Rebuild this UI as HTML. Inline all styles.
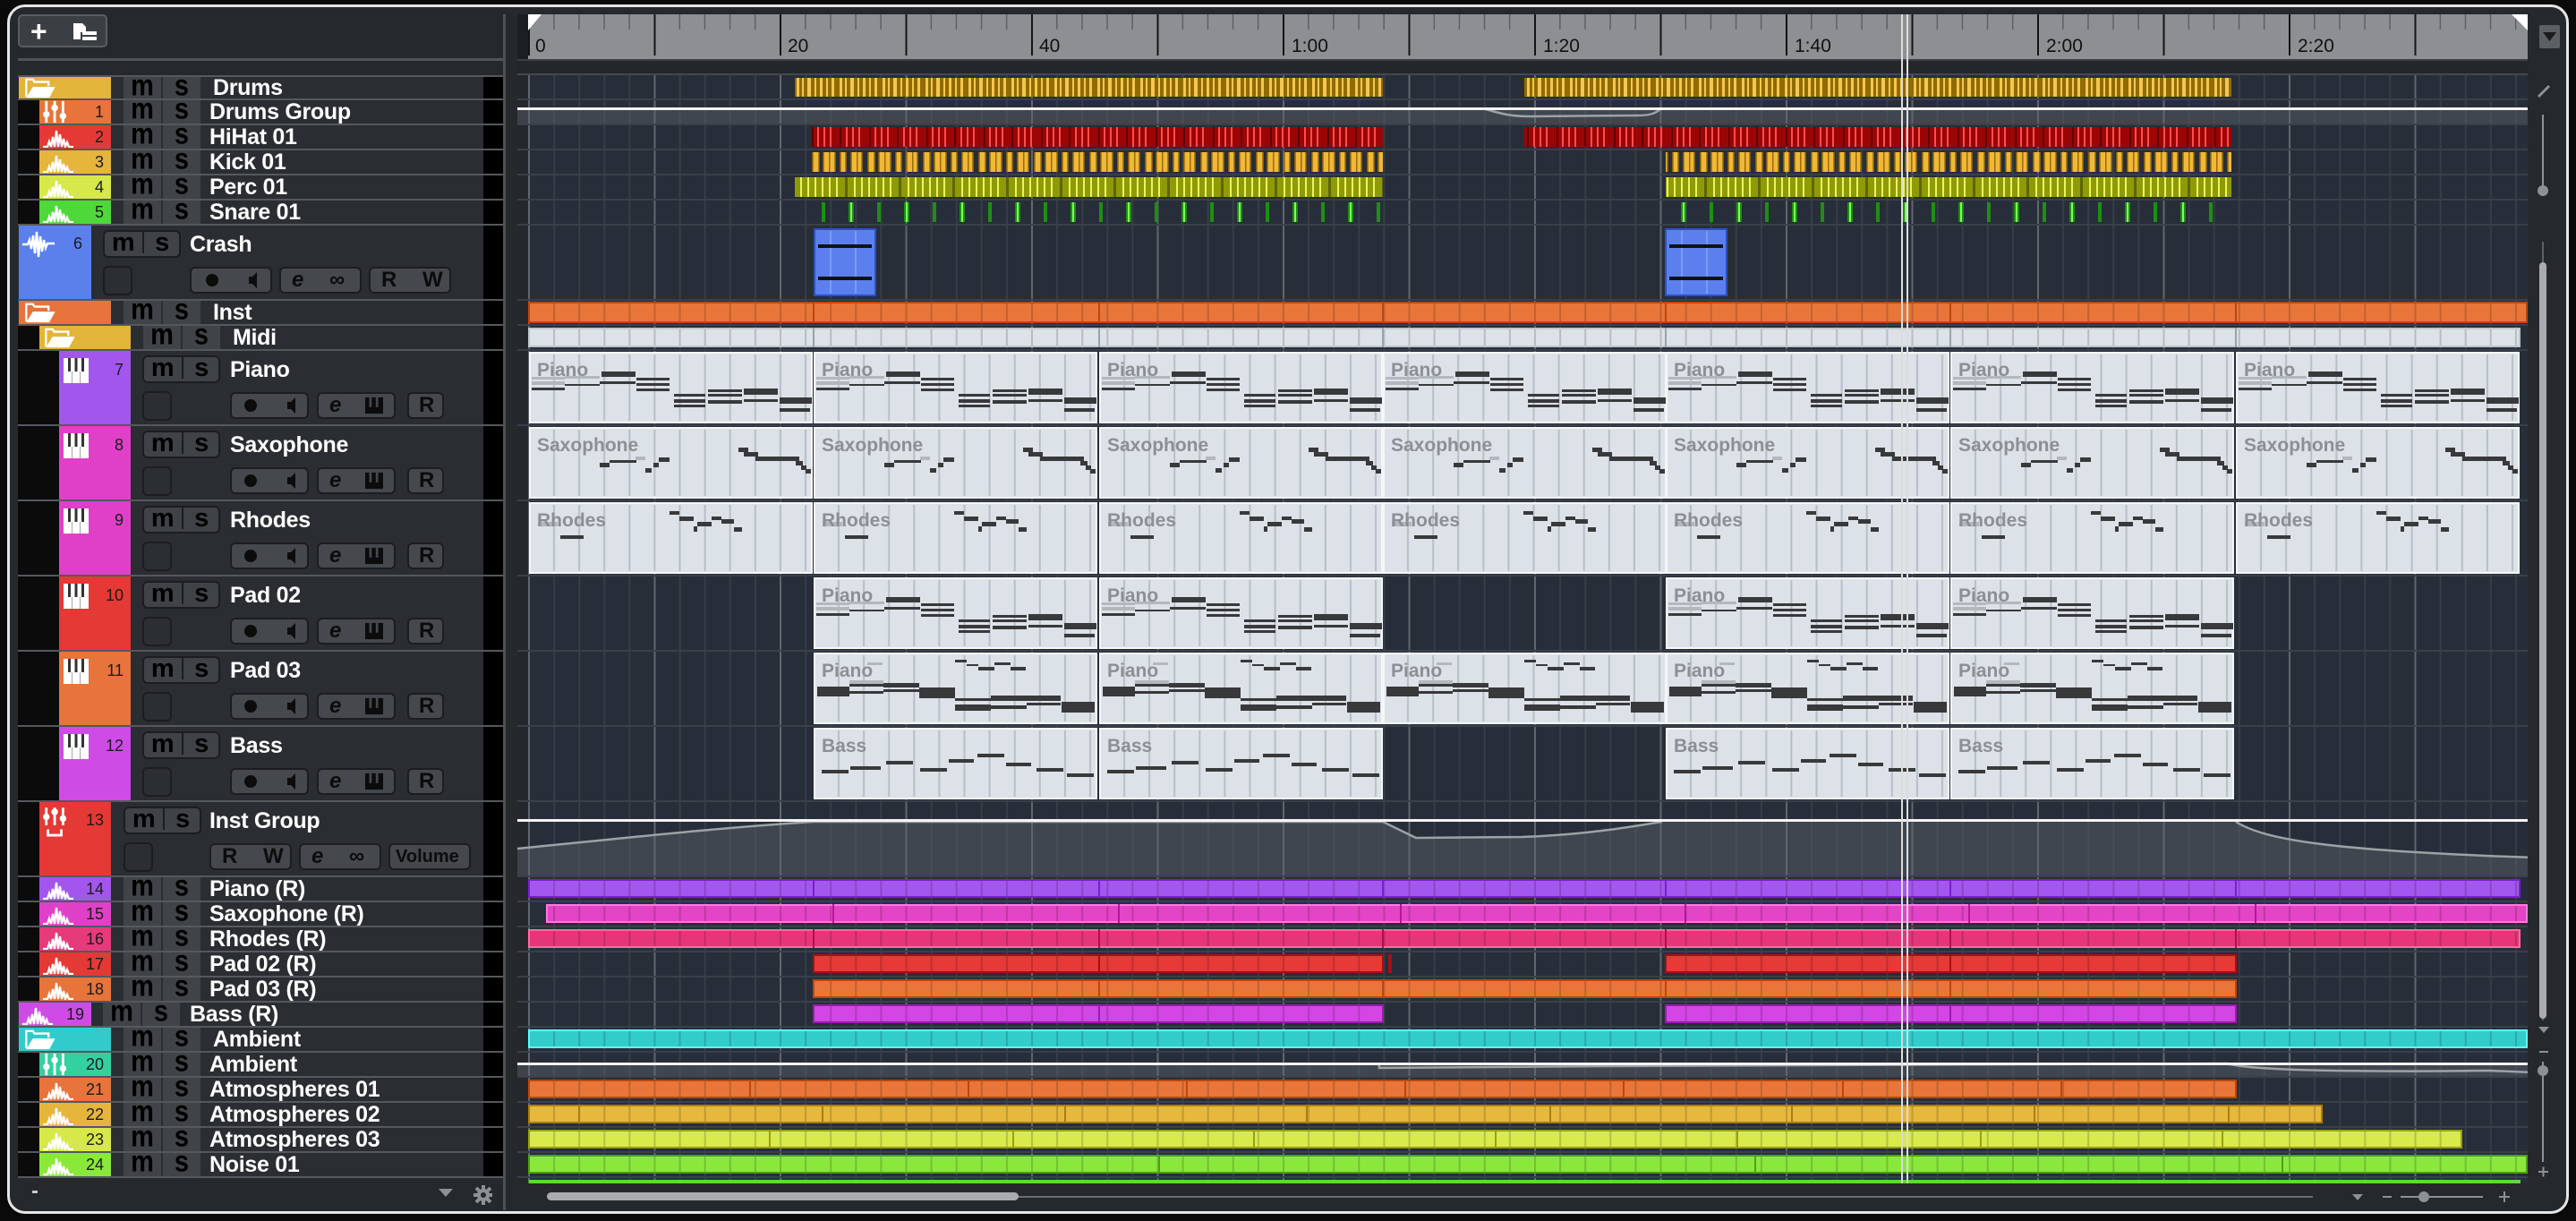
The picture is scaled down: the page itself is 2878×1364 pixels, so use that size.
<!DOCTYPE html>
<html><head><meta charset="utf-8"><style>
body{margin:0;background:#0a0a0a;width:2878px;height:1364px;overflow:hidden;position:relative;font-family:"Liberation Sans",Arial,sans-serif}
.a{position:absolute}
.rw{position:absolute;left:0;width:562px;line-height:26px;height:26px}
.lk{position:absolute;top:0;height:100%;background:#0b0b0b}
.c{position:absolute;top:0;height:100%}
.ic{position:absolute;overflow:visible}
.nu{position:absolute;top:0;font-size:18px;color:#1c1c1c;text-align:right}
.m,.s{position:absolute;top:0;height:100%;width:42px;background:#404347;color:#000;font-weight:900;font-size:29px;text-align:center;line-height:20px;transform-origin:50% 50%}
.m span,.s span{display:inline-block;transform:scaleY(1.15)}
.n{position:absolute;top:0;color:#fff;font-weight:bold;font-size:25px;white-space:nowrap;letter-spacing:-0.3px}
.bx{position:absolute;background:#3f4246;border:2px solid #1b1d20;border-radius:6px;box-sizing:border-box}
.bx span{position:absolute;top:0;width:50%;text-align:center;color:#000;font-weight:900;font-size:29px;line-height:24px}
.g{position:absolute;background:#45484c;border:2px solid #1b1d20;border-radius:6px;box-sizing:border-box;height:30px;color:#0c0c0c;font-weight:bold;font-size:24px;line-height:26px}
.g i{position:absolute;font-style:normal}
.sp{position:absolute;left:20px;width:542px;height:2px;background:#55585c}
</style></head><body>

<svg width="0" height="0" style="position:absolute">
<defs>
<symbol id="wf" viewBox="0 0 36 22"><path d="M1 21H6L8 15L10 21L12 10L14 21L16 3L18 21L20 7L22 21L24 12L26 21L28 16L30 21H35" stroke="#fff" stroke-width="2.3" fill="none"/></symbol>
<symbol id="wf2" viewBox="0 0 38 30"><path d="M1 15H7L9 10L11 20L13 5L15 25L17 1L19 29L21 6L23 23L25 10L27 19L29 14H37" stroke="#fff" stroke-width="2.4" fill="none"/></symbol>
<symbol id="fd" viewBox="0 0 40 26"><path d="M3 24V3H11L13 6H30V11" stroke="#fff" stroke-width="2.5" fill="none"/><path d="M3 25L11 12H38L31 25Z" fill="#fff"/></symbol>
<symbol id="gr" viewBox="0 0 30 28"><g stroke="#fff" stroke-width="3"><path d="M4 1V27M14 1V27M24 1V27"/></g><g fill="#fff"><circle cx="4" cy="17" r="4"/><circle cx="14" cy="9" r="4"/><circle cx="24" cy="19" r="4"/></g></symbol>
<symbol id="gr2" viewBox="0 0 30 40"><g stroke="#fff" stroke-width="3"><path d="M4 1V22M14 1V22M24 1V22"/></g><g fill="#fff"><circle cx="4" cy="12" r="4"/><circle cx="14" cy="6" r="4"/><circle cx="24" cy="14" r="4"/></g><path d="M6 27V34H22V27" stroke="#fff" stroke-width="3" fill="none"/></symbol>
<symbol id="pi" viewBox="0 0 28 28"><rect width="28" height="28" fill="#fff"/><g fill="#333"><rect x="5" y="0" width="3" height="15"/><rect x="12.5" y="0" width="3" height="15"/><rect x="20" y="0" width="3" height="15"/></g><g fill="rgba(0,0,0,.35)"><rect x="9" y="15" width="1" height="13"/><rect x="18" y="15" width="1" height="13"/></g></symbol>
<symbol id="spk" viewBox="0 0 12 22"><path d="M2 7H6L11 2V20L6 15H2Z" fill="#0c0c0c"/></symbol>
<symbol id="keys" viewBox="0 0 22 20"><rect x="0" y="0" width="22" height="20" fill="#0c0c0c"/><g fill="#45484c"><rect x="5" y="0" width="3" height="12"/><rect x="13" y="0" width="3" height="12"/></g></symbol>
</defs></svg>

<div class="a" style="left:8px;top:5px;width:2856px;height:1345px;border:3px solid #e6e6e6;border-radius:20px;background:#26292c"></div>

<svg class="a" style="left:0;top:0" width="2878" height="1364">
<defs>
<pattern id="pg" x="590" y="0" width="140.5" height="10" patternUnits="userSpaceOnUse">
<rect x="28.1" width="2" height="10" fill="#363d47"/><rect x="56.2" width="2" height="10" fill="#363d47"/><rect x="84.3" width="2" height="10" fill="#363d47"/><rect x="112.4" width="2" height="10" fill="#363d47"/><rect x="0" width="2" height="10" fill="#62666c"/></pattern>
<pattern id="prl" x="590" y="0" width="140.5" height="66" patternUnits="userSpaceOnUse">
<rect x="0" y="16" width="2" height="46" fill="#141414"/><g fill="#5e6063"><rect x="28.1" y="16" width="1.5" height="17"/><rect x="56.2" y="16" width="1.5" height="17"/><rect x="84.3" y="16" width="1.5" height="17"/><rect x="112.4" y="16" width="1.5" height="17"/></g></pattern>
<pattern id="tk" x="590" y="0" width="28.1" height="10" patternUnits="userSpaceOnUse"><rect width="2" height="10" fill="rgba(0,0,0,.17)"/></pattern>
<pattern id="tc" x="0" y="0" width="28.1" height="10" patternUnits="userSpaceOnUse"><rect x="26" width="2" height="10" fill="#b6bec8"/></pattern>
<pattern id="pdf" x="888" y="0" width="48" height="10" patternUnits="userSpaceOnUse"><rect width="48" height="10" fill="#8f6b00"/><g fill="#f5c650"><rect x="2" width="3" height="10"/><rect x="8" width="2" height="10"/><rect x="14" width="4" height="10"/><rect x="22" width="2" height="10"/><rect x="28" width="3" height="10"/><rect x="35" width="2" height="10"/><rect x="41" width="3" height="10"/></g></pattern>
<pattern id="phh" x="907" y="0" width="64" height="10" patternUnits="userSpaceOnUse"><rect width="64" height="10" fill="#9c0505"/><g fill="#ff4d4d"><rect x="6" width="2" height="10"/><rect x="13" width="2" height="10"/><rect x="20" width="2" height="10"/><rect x="38" width="2" height="10"/><rect x="45" width="2" height="10"/><rect x="52" width="2" height="10"/></g><rect x="0" width="2" height="10" fill="#5e0000"/><rect x="31" width="2" height="10" fill="#5e0000"/></pattern>
<pattern id="pk" x="907" y="0" width="62" height="10" patternUnits="userSpaceOnUse"><g fill="#f0b83a" stroke="#9b6c00" stroke-width="1.5"><rect x="1" y="-2" width="7" height="14"/><rect x="13" y="-2" width="13" height="14"/><rect x="32" y="-2" width="6" height="14"/><rect x="44" y="-2" width="12" height="14"/></g><rect x="19" width="1.5" height="10" fill="#9b6c00"/><rect x="50" width="1.5" height="10" fill="#9b6c00"/></pattern>
<pattern id="ppc" x="888" y="0" width="60" height="10" patternUnits="userSpaceOnUse"><rect width="60" height="10" fill="#8f9b06"/><g fill="#ecf45c"><rect x="6" width="2" height="10"/><rect x="14" width="2" height="10"/><rect x="22" width="2" height="10"/><rect x="30" width="2" height="10"/><rect x="38" width="2" height="10"/><rect x="46" width="2" height="10"/></g><rect x="56" width="3" height="10" fill="#5d6600"/></pattern>
<pattern id="psn" x="918" y="0" width="62" height="10" patternUnits="userSpaceOnUse"><rect x="0" width="4" height="10" fill="#1d8f12"/><rect x="30" width="6" height="10" fill="#1d8f12"/><rect x="32" width="2" height="10" fill="#7dff5a"/></pattern>
<g id="cb"><rect x="0" y="0" width="315" height="78" fill="#dde2e8" stroke="#f4f6f8" stroke-width="2"/><rect x="2" y="2" width="311" height="74" fill="url(#tc)"/></g>
<g id="np"><g fill="#b3b8be"><rect x="2" y="27" width="37" height="3"/><rect x="2" y="32" width="37" height="4"/><rect x="39" y="26" width="39" height="3"/></g><g fill="#38393b"><rect x="2" y="39" width="37" height="3"/><rect x="39" y="35" width="39" height="2"/><rect x="80" y="21" width="38" height="6"/><rect x="78" y="32" width="40" height="3"/><rect x="119" y="28" width="37" height="3"/><rect x="119" y="34" width="37" height="3"/><rect x="119" y="40" width="37" height="3"/><rect x="161" y="46" width="35" height="3"/><rect x="161" y="52" width="35" height="4"/><rect x="161" y="58" width="35" height="3"/><rect x="199" y="41" width="38" height="3"/><rect x="199" y="46" width="38" height="3"/><rect x="199" y="53" width="38" height="4"/><rect x="239" y="40" width="38" height="7"/><rect x="239" y="52" width="38" height="3"/><rect x="279" y="50" width="36" height="7"/><rect x="279" y="62" width="34" height="4"/></g></g>
<g id="ns"><rect x="118" y="32" width="11" height="4" fill="#b3b8be"/><g fill="#38393b"><rect x="78" y="39" width="11" height="5"/><rect x="89" y="36" width="30" height="3"/><rect x="129" y="45" width="7" height="5"/><rect x="138" y="39" width="6" height="5"/><rect x="144" y="33" width="12" height="5"/><rect x="233" y="22" width="11" height="5"/><rect x="239" y="27" width="16" height="5"/><rect x="252" y="32" width="49" height="5"/><rect x="297" y="37" width="8" height="5"/><rect x="303" y="42" width="6" height="5"/><rect x="308" y="46" width="6" height="5"/></g></g>
<g id="nr"><rect x="9" y="21" width="22" height="5" fill="#b3b8be"/><g fill="#38393b"><rect x="34" y="36" width="26" height="4"/><rect x="156" y="9" width="11" height="4"/><rect x="167" y="15" width="16" height="5"/><rect x="183" y="26" width="4" height="6"/><rect x="187" y="21" width="16" height="5"/><rect x="203" y="15" width="11" height="4"/><rect x="214" y="18" width="14" height="5"/><rect x="228" y="27" width="9" height="5"/></g></g>
<g id="n3"><g fill="#b3b8be"><rect x="39" y="30" width="38" height="4"/><rect x="59" y="10" width="17" height="3"/></g><g fill="#38393b"><rect x="3" y="37" width="36" height="11"/><rect x="39" y="34" width="38" height="3"/><rect x="39" y="42" width="38" height="3"/><rect x="77" y="33" width="40" height="5"/><rect x="77" y="40" width="40" height="3"/><rect x="117" y="38" width="40" height="12"/><rect x="157" y="50" width="40" height="3"/><rect x="157" y="57" width="40" height="7"/><rect x="197" y="47" width="40" height="6"/><rect x="197" y="58" width="40" height="4"/><rect x="237" y="47" width="38" height="6"/><rect x="237" y="55" width="38" height="3"/><rect x="276" y="54" width="37" height="12"/><rect x="157" y="7" width="13" height="3"/><rect x="170" y="12" width="13" height="2"/><rect x="183" y="15" width="18" height="4"/><rect x="201" y="10" width="18" height="3"/><rect x="219" y="15" width="17" height="4"/></g></g>
<g id="nb" fill="#38393b"><rect x="8" y="46" width="30" height="4"/><rect x="40" y="42" width="34" height="4"/><rect x="80" y="36" width="30" height="4"/><rect x="118" y="44" width="30" height="4"/><rect x="150" y="34" width="28" height="4"/><rect x="182" y="28" width="30" height="4"/><rect x="214" y="38" width="28" height="4"/><rect x="248" y="44" width="30" height="4"/><rect x="282" y="50" width="30" height="4"/></g>
</defs>
<style>.cl{font:bold 21px "Liberation Sans",Arial,sans-serif;fill:#8c8f93}.rl{font:21px "Liberation Sans",Arial,sans-serif;fill:#111}</style>

<rect x="578" y="16" width="12" height="50" fill="#1c1f22"/>
<rect x="590" y="16" width="2234" height="50" fill="#8d8f92"/>
<rect x="590" y="16" width="2234" height="50" fill="url(#prl)"/>
<path d="M590 16H605L590 34Z" fill="#fff"/><path d="M2806 16H2824V34Z" fill="#fff"/>
<text class="rl" x="598" y="58">0</text><text class="rl" x="880" y="58">20</text><text class="rl" x="1161" y="58">40</text><text class="rl" x="1443" y="58">1:00</text><text class="rl" x="1724" y="58">1:20</text><text class="rl" x="2005" y="58">1:40</text><text class="rl" x="2286" y="58">2:00</text><text class="rl" x="2567" y="58">2:20</text>
<rect x="578" y="66" width="2252" height="18" fill="#24272a"/><rect x="578" y="66" width="2252" height="2" fill="#3c4045"/><rect x="578" y="82" width="2252" height="2" fill="#45494e"/>

<rect x="578" y="84" width="12" height="1238" fill="#24282c"/>
<rect x="590" y="84" width="2234" height="1238" fill="#272e39"/>
<rect x="590" y="84" width="2234" height="1238" fill="url(#pg)"/>
<g fill="#39404a">
<rect x="578" y="110" width="2246" height="2"/><rect x="578" y="138" width="2246" height="2"/><rect x="578" y="166" width="2246" height="2"/><rect x="578" y="194" width="2246" height="2"/><rect x="578" y="222" width="2246" height="2"/><rect x="578" y="250" width="2246" height="2"/><rect x="578" y="334" width="2246" height="2"/><rect x="578" y="362" width="2246" height="2"/><rect x="578" y="390" width="2246" height="2"/><rect x="578" y="474" width="2246" height="2"/><rect x="578" y="558" width="2246" height="2"/><rect x="578" y="642" width="2246" height="2"/><rect x="578" y="726" width="2246" height="2"/><rect x="578" y="810" width="2246" height="2"/><rect x="578" y="894" width="2246" height="2"/><rect x="578" y="978" width="2246" height="2"/><rect x="578" y="1006" width="2246" height="2"/><rect x="578" y="1034" width="2246" height="2"/><rect x="578" y="1062" width="2246" height="2"/><rect x="578" y="1090" width="2246" height="2"/><rect x="578" y="1118" width="2246" height="2"/><rect x="578" y="1146" width="2246" height="2"/><rect x="578" y="1174" width="2246" height="2"/><rect x="578" y="1202" width="2246" height="2"/><rect x="578" y="1230" width="2246" height="2"/><rect x="578" y="1258" width="2246" height="2"/><rect x="578" y="1286" width="2246" height="2"/><rect x="578" y="1314" width="2246" height="2"/>
</g>

<rect x="578" y="123" width="2252" height="15" fill="rgba(95,100,108,.45)"/>
<path d="M1660 122C1680 128 1690 130 1710 130L1830 129C1845 129 1850 126 1855 122" stroke="#9ea2a7" stroke-width="2.5" fill="none"/>
<rect x="578" y="120" width="2252" height="3" fill="#f4f4f4"/>
<path d="M578 948C700 936 800 925 909 918L1545 918L1582 936L1700 935C1780 932 1830 922 1857 918L2498 918C2530 938 2600 950 2830 958V978H578Z" fill="rgba(95,100,108,.45)"/>
<path d="M578 948C700 936 800 925 909 918L1545 918L1582 936L1700 935C1780 932 1830 922 1857 918M2498 918C2530 938 2600 950 2830 958" stroke="#9ea2a7" stroke-width="2.5" fill="none"/>
<rect x="578" y="915" width="2252" height="3" fill="#f4f4f4"/>
<rect x="578" y="1190" width="2252" height="12" fill="rgba(95,100,108,.45)"/>
<path d="M1541 1188V1193L1800 1191C2000 1190 2200 1189 2488 1188M2488 1188C2520 1198 2700 1197 2780 1196L2830 1198" stroke="#9ea2a7" stroke-width="2.5" fill="none"/>
<rect x="578" y="1187" width="2252" height="3" fill="#f4f4f4"/>

<rect x="888" y="87" width="657" height="21" fill="url(#pdf)"/><rect x="1703" y="87" width="790" height="21" fill="url(#pdf)"/>
<rect x="907" y="142" width="638" height="22" fill="url(#phh)"/><rect x="1703" y="142" width="790" height="22" fill="url(#phh)"/>
<rect x="907" y="170" width="638" height="22" fill="url(#pk)"/><rect x="1861" y="170" width="632" height="22" fill="url(#pk)"/>
<rect x="888" y="198" width="657" height="22" fill="url(#ppc)"/><rect x="1861" y="198" width="632" height="22" fill="url(#ppc)"/>
<rect x="918" y="226" width="627" height="22" fill="url(#psn)"/><rect x="1861" y="226" width="632" height="22" fill="url(#psn)"/>
<g fill="#5b80ee" stroke="#2d4fc4" stroke-width="2"><rect x="910" y="256" width="68" height="74"/><rect x="1861" y="256" width="68" height="74"/></g>
<g fill="#7a9af8"><rect x="927" y="258" width="2" height="70"/><rect x="955" y="258" width="2" height="70"/><rect x="1878" y="258" width="2" height="70"/><rect x="1906" y="258" width="2" height="70"/></g>
<g fill="#111"><rect x="914" y="273" width="60" height="4"/><rect x="914" y="309" width="60" height="4"/><rect x="1865" y="273" width="60" height="4"/><rect x="1865" y="309" width="60" height="4"/></g>

<rect x="591" y="338" width="2232" height="22" fill="#e8763a" stroke="#b8480f" stroke-width="2"/><rect x="592" y="339" width="2230" height="20" fill="url(#tk)"/>
<g fill="#b8480f"><rect x="908" y="338" width="2" height="22"/><rect x="1227" y="338" width="2" height="22"/><rect x="1544" y="338" width="2" height="22"/><rect x="1860" y="338" width="2" height="22"/><rect x="2178" y="338" width="2" height="22"/><rect x="2497" y="338" width="2" height="22"/></g>
<rect x="591" y="367" width="2224" height="20" fill="#dde2e8" stroke="#bfc5cc" stroke-width="2"/><rect x="592" y="368" width="2222" height="18" fill="url(#tk)"/>
<g fill="#9aa2ac"><rect x="908" y="366" width="2" height="22"/><rect x="1227" y="366" width="2" height="22"/><rect x="1544" y="366" width="2" height="22"/><rect x="1860" y="366" width="2" height="22"/><rect x="2178" y="366" width="2" height="22"/><rect x="2497" y="366" width="2" height="22"/></g>

<g transform="translate(592,394)"><use href="#cb"/><use href="#np"/><text class="cl" x="8" y="26">Piano</text></g>
<g transform="translate(910,394)"><use href="#cb"/><use href="#np"/><text class="cl" x="8" y="26">Piano</text></g>
<g transform="translate(1229,394)"><use href="#cb"/><use href="#np"/><text class="cl" x="8" y="26">Piano</text></g>
<g transform="translate(1546,394)"><use href="#cb"/><use href="#np"/><text class="cl" x="8" y="26">Piano</text></g>
<g transform="translate(1862,394)"><use href="#cb"/><use href="#np"/><text class="cl" x="8" y="26">Piano</text></g>
<g transform="translate(2180,394)"><use href="#cb"/><use href="#np"/><text class="cl" x="8" y="26">Piano</text></g>
<g transform="translate(2499,394)"><use href="#cb"/><use href="#np"/><text class="cl" x="8" y="26">Piano</text></g>

<g transform="translate(592,478)"><use href="#cb"/><use href="#ns"/><text class="cl" x="8" y="26">Saxophone</text></g>
<g transform="translate(910,478)"><use href="#cb"/><use href="#ns"/><text class="cl" x="8" y="26">Saxophone</text></g>
<g transform="translate(1229,478)"><use href="#cb"/><use href="#ns"/><text class="cl" x="8" y="26">Saxophone</text></g>
<g transform="translate(1546,478)"><use href="#cb"/><use href="#ns"/><text class="cl" x="8" y="26">Saxophone</text></g>
<g transform="translate(1862,478)"><use href="#cb"/><use href="#ns"/><text class="cl" x="8" y="26">Saxophone</text></g>
<g transform="translate(2180,478)"><use href="#cb"/><use href="#ns"/><text class="cl" x="8" y="26">Saxophone</text></g>
<g transform="translate(2499,478)"><use href="#cb"/><use href="#ns"/><text class="cl" x="8" y="26">Saxophone</text></g>

<g transform="translate(592,562)"><use href="#cb"/><use href="#nr"/><text class="cl" x="8" y="26">Rhodes</text></g>
<g transform="translate(910,562)"><use href="#cb"/><use href="#nr"/><text class="cl" x="8" y="26">Rhodes</text></g>
<g transform="translate(1229,562)"><use href="#cb"/><use href="#nr"/><text class="cl" x="8" y="26">Rhodes</text></g>
<g transform="translate(1546,562)"><use href="#cb"/><use href="#nr"/><text class="cl" x="8" y="26">Rhodes</text></g>
<g transform="translate(1862,562)"><use href="#cb"/><use href="#nr"/><text class="cl" x="8" y="26">Rhodes</text></g>
<g transform="translate(2180,562)"><use href="#cb"/><use href="#nr"/><text class="cl" x="8" y="26">Rhodes</text></g>
<g transform="translate(2499,562)"><use href="#cb"/><use href="#nr"/><text class="cl" x="8" y="26">Rhodes</text></g>

<g transform="translate(910,646)"><use href="#cb"/><use href="#np"/><text class="cl" x="8" y="26">Piano</text></g>
<g transform="translate(1229,646)"><use href="#cb"/><use href="#np"/><text class="cl" x="8" y="26">Piano</text></g>
<g transform="translate(1862,646)"><use href="#cb"/><use href="#np"/><text class="cl" x="8" y="26">Piano</text></g>
<g transform="translate(2180,646)"><use href="#cb"/><use href="#np"/><text class="cl" x="8" y="26">Piano</text></g>

<g transform="translate(910,730)"><use href="#cb"/><use href="#n3"/><text class="cl" x="8" y="26">Piano</text></g>
<g transform="translate(1229,730)"><use href="#cb"/><use href="#n3"/><text class="cl" x="8" y="26">Piano</text></g>
<g transform="translate(1546,730)"><use href="#cb"/><use href="#n3"/><text class="cl" x="8" y="26">Piano</text></g>
<g transform="translate(1862,730)"><use href="#cb"/><use href="#n3"/><text class="cl" x="8" y="26">Piano</text></g>
<g transform="translate(2180,730)"><use href="#cb"/><use href="#n3"/><text class="cl" x="8" y="26">Piano</text></g>

<g transform="translate(910,814)"><use href="#cb"/><use href="#nb"/><text class="cl" x="8" y="26">Bass</text></g>
<g transform="translate(1229,814)"><use href="#cb"/><use href="#nb"/><text class="cl" x="8" y="26">Bass</text></g>
<g transform="translate(1862,814)"><use href="#cb"/><use href="#nb"/><text class="cl" x="8" y="26">Bass</text></g>
<g transform="translate(2180,814)"><use href="#cb"/><use href="#nb"/><text class="cl" x="8" y="26">Bass</text></g>

<g stroke-width="2">
<rect x="591" y="983" width="2224" height="19" fill="#a457ee" stroke="#7a1ed0"/>
<rect x="611" y="1011" width="2212" height="19" fill="#e444c6" stroke="#ff7ae0"/>
<rect x="591" y="1039" width="2224" height="19" fill="#e6367a" stroke="#ff6aa0"/>
<rect x="909" y="1067" width="636" height="19" fill="#e63a36" stroke="#a81010"/><rect x="1861" y="1067" width="637" height="19" fill="#e63a36" stroke="#a81010"/>
<rect x="909" y="1095" width="1589" height="19" fill="#e8763a" stroke="#b8480f"/>
<rect x="909" y="1123" width="636" height="19" fill="#d246e4" stroke="#9a1ab0"/><rect x="1861" y="1123" width="637" height="19" fill="#d246e4" stroke="#9a1ab0"/>
<rect x="591" y="1151" width="2232" height="19" fill="#32cccb" stroke="#5ffafa"/>
<rect x="591" y="1207" width="1907" height="19" fill="#e8763a" stroke="#b8480f"/>
<rect x="591" y="1235" width="2003" height="19" fill="#e6b83c" stroke="#a88010"/>
<rect x="591" y="1263" width="2159" height="19" fill="#d8ea4c" stroke="#98a010"/>
<rect x="591" y="1291" width="2232" height="19" fill="#8ae83a" stroke="#4ea010"/>
</g>
<rect x="591" y="1318" width="2225" height="4" fill="#5ed83a"/>
<g fill="url(#tk)"><rect x="592" y="984" width="2222" height="17"/><rect x="612" y="1012" width="2210" height="17"/><rect x="592" y="1040" width="2222" height="17"/><rect x="910" y="1068" width="634" height="17"/><rect x="1862" y="1068" width="635" height="17"/><rect x="910" y="1096" width="1587" height="17"/><rect x="910" y="1124" width="634" height="17"/><rect x="1862" y="1124" width="635" height="17"/><rect x="592" y="1152" width="2230" height="17"/><rect x="592" y="1208" width="1905" height="17"/><rect x="592" y="1236" width="2001" height="17"/><rect x="592" y="1264" width="2157" height="17"/><rect x="592" y="1292" width="2230" height="17"/></g>
<g fill="#7a1ed0"><rect x="908" y="982" width="2" height="21"/><rect x="1227" y="982" width="2" height="21"/><rect x="1544" y="982" width="2" height="21"/><rect x="1860" y="982" width="2" height="21"/><rect x="2178" y="982" width="2" height="21"/><rect x="2497" y="982" width="2" height="21"/></g>
<g fill="#b01a98"><rect x="930" y="1010" width="2" height="21"/><rect x="1249" y="1010" width="2" height="21"/><rect x="1564" y="1010" width="2" height="21"/><rect x="1882" y="1010" width="2" height="21"/><rect x="2199" y="1010" width="2" height="21"/><rect x="2519" y="1010" width="2" height="21"/></g>
<g fill="#b01050"><rect x="908" y="1038" width="2" height="21"/><rect x="1227" y="1038" width="2" height="21"/><rect x="1544" y="1038" width="2" height="21"/><rect x="1860" y="1038" width="2" height="21"/><rect x="2178" y="1038" width="2" height="21"/><rect x="2497" y="1038" width="2" height="21"/></g>
<g fill="#a81010"><rect x="1227" y="1066" width="2" height="21"/><rect x="2178" y="1066" width="2" height="21"/><rect x="1551" y="1066" width="4" height="21"/></g>
<g fill="#b8480f"><rect x="1227" y="1094" width="2" height="21"/><rect x="1544" y="1094" width="2" height="21"/><rect x="1860" y="1094" width="2" height="21"/><rect x="2178" y="1094" width="2" height="21"/></g>
<g fill="#9a1ab0"><rect x="1227" y="1122" width="2" height="21"/><rect x="2178" y="1122" width="2" height="21"/></g>
<g fill="#b8480f"><rect x="837" y="1206" width="2" height="21"/><rect x="1081" y="1206" width="2" height="21"/><rect x="1325" y="1206" width="2" height="21"/><rect x="1569" y="1206" width="2" height="21"/><rect x="1813" y="1206" width="2" height="21"/><rect x="2058" y="1206" width="2" height="21"/><rect x="2302" y="1206" width="2" height="21"/></g>
<g fill="#a88010"><rect x="646" y="1234" width="2" height="21"/><rect x="918" y="1234" width="2" height="21"/><rect x="1189" y="1234" width="2" height="21"/><rect x="1459" y="1234" width="2" height="21"/><rect x="1731" y="1234" width="2" height="21"/><rect x="2001" y="1234" width="2" height="21"/><rect x="2272" y="1234" width="2" height="21"/><rect x="2489" y="1234" width="2" height="21"/></g>
<g fill="#98a010"><rect x="859" y="1262" width="2" height="21"/><rect x="1131" y="1262" width="2" height="21"/><rect x="1400" y="1262" width="2" height="21"/><rect x="1670" y="1262" width="2" height="21"/><rect x="1940" y="1262" width="2" height="21"/><rect x="2212" y="1262" width="2" height="21"/><rect x="2482" y="1262" width="2" height="21"/></g>
<g fill="#4ea010"><rect x="1294" y="1290" width="2" height="21"/><rect x="1960" y="1290" width="2" height="21"/><rect x="2549" y="1290" width="2" height="21"/></g>

<rect x="2124" y="16" width="2" height="1306" fill="#dcdcdc"/><rect x="2130" y="16" width="2" height="1306" fill="#dcdcdc"/>

<rect x="2824" y="16" width="38" height="1306" fill="#26292c"/>
<rect x="2837" y="28" width="23" height="26" rx="2" fill="#5c5f63"/><path d="M2841 36H2856L2848.5 46Z" fill="#1b1b1b"/>
<path d="M2836 108L2848 96" stroke="#8d9094" stroke-width="3"/>
<rect x="2840" y="128" width="2" height="88" fill="#8d9094"/><circle cx="2841" cy="213" r="6" fill="#8d9094"/>
<rect x="2840" y="270" width="2" height="870" fill="#5c5f63"/><rect x="2837" y="293" width="8" height="845" rx="4" fill="#a9abae"/>
<path d="M2836 1147H2848L2842 1154Z" fill="#8d9094"/><rect x="2837" y="1174" width="10" height="2" fill="#8d9094"/>
<rect x="2840" y="1186" width="2" height="112" fill="#8d9094"/><circle cx="2841" cy="1196" r="6" fill="#8d9094"/>
<path d="M2836 1309H2847M2841.5 1303.5V1314.5" stroke="#8d9094" stroke-width="2"/>
<rect x="611" y="1336" width="1973" height="2" fill="#6b6e72"/><rect x="611" y="1332" width="527" height="9" rx="4.5" fill="#a9abae"/>
<path d="M2628 1334H2640L2634 1341Z" fill="#8d9094"/><rect x="2662" y="1336" width="10" height="2" fill="#8d9094"/>
<rect x="2682" y="1336" width="92" height="2" fill="#8d9094"/><circle cx="2708" cy="1337" r="6" fill="#8d9094"/>
<path d="M2792 1337H2804M2798 1331V1343" stroke="#8d9094" stroke-width="2"/>
</svg>

<div class="a" style="left:20px;top:16px;width:100px;height:37px;background:#3b3e42;border:2px solid #5a5d61;border-radius:5px;box-sizing:border-box"></div>
<div class="a" style="left:34px;top:22px;color:#fff;font-weight:bold;font-size:32px;line-height:26px">+</div>
<svg class="a" style="left:78px;top:22px" width="34" height="26"><path d="M4 4H14L18 8V14H10L4 10Z" fill="#fff"/><rect x="4" y="10" width="8" height="12" fill="#fff"/><rect x="14" y="13" width="16" height="4" fill="#fff"/><rect x="14" y="19" width="16" height="4" fill="#fff"/></svg>
<div class="a" style="left:20px;top:65px;width:542px;height:3px;background:#505458"></div>
<div class="a" style="left:562px;top:16px;width:3px;height:1336px;background:#4d5054"></div>
<div class="a" style="left:20px;top:84px;width:520px;height:1232px;background:#2a2d31"></div>
<div class="a" style="left:540px;top:84px;width:22px;height:1232px;background:#000"></div>

<div class="sp" style="top:84px"></div><div class="sp" style="top:110px"></div><div class="sp" style="top:138px"></div><div class="sp" style="top:166px"></div><div class="sp" style="top:194px"></div><div class="sp" style="top:222px"></div><div class="sp" style="top:250px"></div><div class="sp" style="top:334px"></div><div class="sp" style="top:362px"></div><div class="sp" style="top:390px"></div><div class="sp" style="top:474px"></div><div class="sp" style="top:558px"></div><div class="sp" style="top:642px"></div><div class="sp" style="top:726px"></div><div class="sp" style="top:810px"></div><div class="sp" style="top:894px"></div><div class="sp" style="top:978px"></div><div class="sp" style="top:1006px"></div><div class="sp" style="top:1034px"></div><div class="sp" style="top:1062px"></div><div class="sp" style="top:1090px"></div><div class="sp" style="top:1118px"></div><div class="sp" style="top:1146px"></div><div class="sp" style="top:1174px"></div><div class="sp" style="top:1202px"></div><div class="sp" style="top:1230px"></div><div class="sp" style="top:1258px"></div><div class="sp" style="top:1286px"></div><div class="sp" style="top:1314px"></div>

<div class="rw" style="top:86px;height:24px;line-height:24px"><div class="c" style="left:21px;width:103px;background:#e3b43a"></div><svg class="ic" style="left:26px;top:0" width="38" height="24"><use href="#fd"/></svg><div class="m" style="left:138px"><span>m</span></div><div class="s" style="left:182px"><span>s</span></div><div class="n" style="left:238px">Drums</div></div>

<div class="rw" style="top:112px"><div class="lk" style="left:20px;width:24px"></div><div class="c" style="left:44px;width:80px;background:#e7743a"></div><svg class="ic" style="left:48px;top:0" width="28" height="26"><use href="#gr"/></svg><div class="nu" style="left:92px;width:24px">1</div><div class="m" style="left:138px"><span>m</span></div><div class="s" style="left:182px"><span>s</span></div><div class="n" style="left:234px">Drums Group</div></div>

<div class="rw" style="top:140px"><div class="lk" style="left:20px;width:24px"></div><div class="c" style="left:44px;width:80px;background:#e53935"></div><svg class="ic" style="left:47px;top:3px" width="36" height="22"><use href="#wf"/></svg><div class="nu" style="left:92px;width:24px">2</div><div class="m" style="left:138px"><span>m</span></div><div class="s" style="left:182px"><span>s</span></div><div class="n" style="left:234px">HiHat 01</div></div>

<div class="rw" style="top:168px"><div class="lk" style="left:20px;width:24px"></div><div class="c" style="left:44px;width:80px;background:#e6b53c"></div><svg class="ic" style="left:47px;top:3px" width="36" height="22"><use href="#wf"/></svg><div class="nu" style="left:92px;width:24px">3</div><div class="m" style="left:138px"><span>m</span></div><div class="s" style="left:182px"><span>s</span></div><div class="n" style="left:234px">Kick 01</div></div>

<div class="rw" style="top:196px"><div class="lk" style="left:20px;width:24px"></div><div class="c" style="left:44px;width:80px;background:#d6e84a"></div><svg class="ic" style="left:47px;top:3px" width="36" height="22"><use href="#wf"/></svg><div class="nu" style="left:92px;width:24px">4</div><div class="m" style="left:138px"><span>m</span></div><div class="s" style="left:182px"><span>s</span></div><div class="n" style="left:234px">Perc 01</div></div>

<div class="rw" style="top:224px"><div class="lk" style="left:20px;width:24px"></div><div class="c" style="left:44px;width:80px;background:#4fd83a"></div><svg class="ic" style="left:47px;top:3px" width="36" height="22"><use href="#wf"/></svg><div class="nu" style="left:92px;width:24px">5</div><div class="m" style="left:138px"><span>m</span></div><div class="s" style="left:182px"><span>s</span></div><div class="n" style="left:234px">Snare 01</div></div>

<div class="rw" style="top:252px;height:82px"><div class="c" style="left:21px;width:81px;background:#5b80ec"></div><svg class="ic" style="left:24px;top:6px" width="38" height="30"><use href="#wf2"/></svg><div class="nu" style="left:70px;width:22px;top:5px;line-height:30px">6</div>
<div class="bx" style="left:115px;top:5px;width:87px;height:31px"><span style="left:0">m</span><span style="left:50%;border-left:2px solid #1b1d20">s</span></div>
<div class="bx" style="left:115px;top:45px;width:33px;height:33px;background:#2b2e32"></div>
<div class="n" style="left:212px;top:5px;line-height:32px">Crash</div>
<div class="g" style="left:212px;top:46px;width:92px"><i style="left:16px;top:6px;width:14px;height:14px;border-radius:50%;background:#0c0c0c"></i><svg class="ic" style="left:62px;top:2px" width="12" height="22"><use href="#spk"/></svg></div>
<div class="g" style="left:312px;top:46px;width:92px"><i style="left:12px;font-style:italic">e</i><i style="left:54px">∞</i></div>
<div class="g" style="left:412px;top:46px;width:92px"><i style="left:12px">R</i><i style="left:58px">W</i></div></div>

<div class="rw" style="top:336px"><div class="c" style="left:21px;width:103px;background:#e7743a"></div><svg class="ic" style="left:26px;top:1px" width="38" height="24"><use href="#fd"/></svg><div class="m" style="left:138px"><span>m</span></div><div class="s" style="left:182px"><span>s</span></div><div class="n" style="left:238px">Inst</div></div>

<div class="rw" style="top:364px"><div class="lk" style="left:20px;width:24px"></div><div class="c" style="left:44px;width:102px;background:#e3b43a"></div><svg class="ic" style="left:48px;top:1px" width="38" height="24"><use href="#fd"/></svg><div class="m" style="left:160px"><span>m</span></div><div class="s" style="left:204px"><span>s</span></div><div class="n" style="left:260px">Midi</div></div>

<div class="rw" style="top:392px;height:82px"><div class="lk" style="left:20px;width:46px"></div><div class="c" style="left:66px;width:80px;background:#a356ec"></div><svg class="ic" style="left:71px;top:8px" width="28" height="28"><use href="#pi"/></svg><div class="nu" style="left:110px;width:28px;top:6px;line-height:30px">7</div>
<div class="bx" style="left:159px;top:5px;width:87px;height:31px"><span style="left:0">m</span><span style="left:50%;border-left:2px solid #1b1d20">s</span></div><div class="bx" style="left:159px;top:45px;width:33px;height:33px;background:#2b2e32"></div>
<div class="n" style="left:257px;top:5px;line-height:32px">Piano</div>
<div class="g" style="left:257px;top:46px;width:88px"><i style="left:14px;top:6px;width:14px;height:14px;border-radius:50%;background:#0c0c0c"></i><svg class="ic" style="left:60px;top:2px" width="12" height="22"><use href="#spk"/></svg></div>
<div class="g" style="left:354px;top:46px;width:88px"><i style="left:12px;font-style:italic">e</i><svg class="ic" style="left:52px;top:3px" width="20" height="20"><use href="#keys"/></svg></div>
<div class="g" style="left:455px;top:46px;width:41px"><i style="left:11px">R</i></div></div>

<div class="rw" style="top:476px;height:82px"><div class="lk" style="left:20px;width:46px"></div><div class="c" style="left:66px;width:80px;background:#e040c8"></div><svg class="ic" style="left:71px;top:8px" width="28" height="28"><use href="#pi"/></svg><div class="nu" style="left:110px;width:28px;top:6px;line-height:30px">8</div>
<div class="bx" style="left:159px;top:5px;width:87px;height:31px"><span style="left:0">m</span><span style="left:50%;border-left:2px solid #1b1d20">s</span></div><div class="bx" style="left:159px;top:45px;width:33px;height:33px;background:#2b2e32"></div>
<div class="n" style="left:257px;top:5px;line-height:32px">Saxophone</div>
<div class="g" style="left:257px;top:46px;width:88px"><i style="left:14px;top:6px;width:14px;height:14px;border-radius:50%;background:#0c0c0c"></i><svg class="ic" style="left:60px;top:2px" width="12" height="22"><use href="#spk"/></svg></div>
<div class="g" style="left:354px;top:46px;width:88px"><i style="left:12px;font-style:italic">e</i><svg class="ic" style="left:52px;top:3px" width="20" height="20"><use href="#keys"/></svg></div>
<div class="g" style="left:455px;top:46px;width:41px"><i style="left:11px">R</i></div></div>

<div class="rw" style="top:560px;height:82px"><div class="lk" style="left:20px;width:46px"></div><div class="c" style="left:66px;width:80px;background:#e040c8"></div><svg class="ic" style="left:71px;top:8px" width="28" height="28"><use href="#pi"/></svg><div class="nu" style="left:110px;width:28px;top:6px;line-height:30px">9</div>
<div class="bx" style="left:159px;top:5px;width:87px;height:31px"><span style="left:0">m</span><span style="left:50%;border-left:2px solid #1b1d20">s</span></div><div class="bx" style="left:159px;top:45px;width:33px;height:33px;background:#2b2e32"></div>
<div class="n" style="left:257px;top:5px;line-height:32px">Rhodes</div>
<div class="g" style="left:257px;top:46px;width:88px"><i style="left:14px;top:6px;width:14px;height:14px;border-radius:50%;background:#0c0c0c"></i><svg class="ic" style="left:60px;top:2px" width="12" height="22"><use href="#spk"/></svg></div>
<div class="g" style="left:354px;top:46px;width:88px"><i style="left:12px;font-style:italic">e</i><svg class="ic" style="left:52px;top:3px" width="20" height="20"><use href="#keys"/></svg></div>
<div class="g" style="left:455px;top:46px;width:41px"><i style="left:11px">R</i></div></div>

<div class="rw" style="top:644px;height:82px"><div class="lk" style="left:20px;width:46px"></div><div class="c" style="left:66px;width:80px;background:#e53935"></div><svg class="ic" style="left:71px;top:8px" width="28" height="28"><use href="#pi"/></svg><div class="nu" style="left:110px;width:28px;top:6px;line-height:30px">10</div>
<div class="bx" style="left:159px;top:5px;width:87px;height:31px"><span style="left:0">m</span><span style="left:50%;border-left:2px solid #1b1d20">s</span></div><div class="bx" style="left:159px;top:45px;width:33px;height:33px;background:#2b2e32"></div>
<div class="n" style="left:257px;top:5px;line-height:32px">Pad 02</div>
<div class="g" style="left:257px;top:46px;width:88px"><i style="left:14px;top:6px;width:14px;height:14px;border-radius:50%;background:#0c0c0c"></i><svg class="ic" style="left:60px;top:2px" width="12" height="22"><use href="#spk"/></svg></div>
<div class="g" style="left:354px;top:46px;width:88px"><i style="left:12px;font-style:italic">e</i><svg class="ic" style="left:52px;top:3px" width="20" height="20"><use href="#keys"/></svg></div>
<div class="g" style="left:455px;top:46px;width:41px"><i style="left:11px">R</i></div></div>

<div class="rw" style="top:728px;height:82px"><div class="lk" style="left:20px;width:46px"></div><div class="c" style="left:66px;width:80px;background:#e7743a"></div><svg class="ic" style="left:71px;top:8px" width="28" height="28"><use href="#pi"/></svg><div class="nu" style="left:110px;width:28px;top:6px;line-height:30px">11</div>
<div class="bx" style="left:159px;top:5px;width:87px;height:31px"><span style="left:0">m</span><span style="left:50%;border-left:2px solid #1b1d20">s</span></div><div class="bx" style="left:159px;top:45px;width:33px;height:33px;background:#2b2e32"></div>
<div class="n" style="left:257px;top:5px;line-height:32px">Pad 03</div>
<div class="g" style="left:257px;top:46px;width:88px"><i style="left:14px;top:6px;width:14px;height:14px;border-radius:50%;background:#0c0c0c"></i><svg class="ic" style="left:60px;top:2px" width="12" height="22"><use href="#spk"/></svg></div>
<div class="g" style="left:354px;top:46px;width:88px"><i style="left:12px;font-style:italic">e</i><svg class="ic" style="left:52px;top:3px" width="20" height="20"><use href="#keys"/></svg></div>
<div class="g" style="left:455px;top:46px;width:41px"><i style="left:11px">R</i></div></div>

<div class="rw" style="top:812px;height:82px"><div class="lk" style="left:20px;width:46px"></div><div class="c" style="left:66px;width:80px;background:#cf4be6"></div><svg class="ic" style="left:71px;top:8px" width="28" height="28"><use href="#pi"/></svg><div class="nu" style="left:110px;width:28px;top:6px;line-height:30px">12</div>
<div class="bx" style="left:159px;top:5px;width:87px;height:31px"><span style="left:0">m</span><span style="left:50%;border-left:2px solid #1b1d20">s</span></div><div class="bx" style="left:159px;top:45px;width:33px;height:33px;background:#2b2e32"></div>
<div class="n" style="left:257px;top:5px;line-height:32px">Bass</div>
<div class="g" style="left:257px;top:46px;width:88px"><i style="left:14px;top:6px;width:14px;height:14px;border-radius:50%;background:#0c0c0c"></i><svg class="ic" style="left:60px;top:2px" width="12" height="22"><use href="#spk"/></svg></div>
<div class="g" style="left:354px;top:46px;width:88px"><i style="left:12px;font-style:italic">e</i><svg class="ic" style="left:52px;top:3px" width="20" height="20"><use href="#keys"/></svg></div>
<div class="g" style="left:455px;top:46px;width:41px"><i style="left:11px">R</i></div></div>

<div class="rw" style="top:896px;height:82px"><div class="lk" style="left:20px;width:24px"></div><div class="c" style="left:44px;width:80px;background:#e53935"></div><svg class="ic" style="left:48px;top:5px" width="28" height="38"><use href="#gr2"/></svg><div class="nu" style="left:90px;width:26px;top:5px;line-height:30px">13</div>
<div class="bx" style="left:138px;top:5px;width:87px;height:31px"><span style="left:0">m</span><span style="left:50%;border-left:2px solid #1b1d20">s</span></div><div class="bx" style="left:138px;top:45px;width:33px;height:33px;background:#2b2e32"></div>
<div class="n" style="left:234px;top:5px;line-height:32px">Inst Group</div>
<div class="g" style="left:234px;top:46px;width:92px"><i style="left:12px">R</i><i style="left:58px">W</i></div>
<div class="g" style="left:334px;top:46px;width:92px"><i style="left:12px;font-style:italic">e</i><i style="left:54px">∞</i></div>
<div class="g" style="left:434px;top:46px;width:92px;font-size:20px"><i style="left:6px">Volume</i></div></div>

<div class="rw" style="top:980px"><div class="lk" style="left:20px;width:24px"></div><div class="c" style="left:44px;width:80px;background:#a356ec"></div><svg class="ic" style="left:47px;top:3px" width="36" height="22"><use href="#wf"/></svg><div class="nu" style="left:88px;width:28px">14</div><div class="m" style="left:138px"><span>m</span></div><div class="s" style="left:182px"><span>s</span></div><div class="n" style="left:234px">Piano (R)</div></div>
<div class="rw" style="top:1008px"><div class="lk" style="left:20px;width:24px"></div><div class="c" style="left:44px;width:80px;background:#e040c8"></div><svg class="ic" style="left:47px;top:3px" width="36" height="22"><use href="#wf"/></svg><div class="nu" style="left:88px;width:28px">15</div><div class="m" style="left:138px"><span>m</span></div><div class="s" style="left:182px"><span>s</span></div><div class="n" style="left:234px">Saxophone (R)</div></div>
<div class="rw" style="top:1036px"><div class="lk" style="left:20px;width:24px"></div><div class="c" style="left:44px;width:80px;background:#e63a7a"></div><svg class="ic" style="left:47px;top:3px" width="36" height="22"><use href="#wf"/></svg><div class="nu" style="left:88px;width:28px">16</div><div class="m" style="left:138px"><span>m</span></div><div class="s" style="left:182px"><span>s</span></div><div class="n" style="left:234px">Rhodes (R)</div></div>
<div class="rw" style="top:1064px"><div class="lk" style="left:20px;width:24px"></div><div class="c" style="left:44px;width:80px;background:#e53935"></div><svg class="ic" style="left:47px;top:3px" width="36" height="22"><use href="#wf"/></svg><div class="nu" style="left:88px;width:28px">17</div><div class="m" style="left:138px"><span>m</span></div><div class="s" style="left:182px"><span>s</span></div><div class="n" style="left:234px">Pad 02 (R)</div></div>
<div class="rw" style="top:1092px"><div class="lk" style="left:20px;width:24px"></div><div class="c" style="left:44px;width:80px;background:#e7743a"></div><svg class="ic" style="left:47px;top:3px" width="36" height="22"><use href="#wf"/></svg><div class="nu" style="left:88px;width:28px">18</div><div class="m" style="left:138px"><span>m</span></div><div class="s" style="left:182px"><span>s</span></div><div class="n" style="left:234px">Pad 03 (R)</div></div>
<div class="rw" style="top:1120px"><div class="c" style="left:21px;width:81px;background:#cf4be6"></div><svg class="ic" style="left:24px;top:3px" width="36" height="22"><use href="#wf"/></svg><div class="nu" style="left:66px;width:28px">19</div><div class="m" style="left:115px"><span>m</span></div><div class="s" style="left:159px"><span>s</span></div><div class="n" style="left:212px">Bass (R)</div></div>
<div class="rw" style="top:1148px"><div class="c" style="left:21px;width:103px;background:#32cbcb"></div><svg class="ic" style="left:26px;top:1px" width="38" height="24"><use href="#fd"/></svg><div class="m" style="left:138px"><span>m</span></div><div class="s" style="left:182px"><span>s</span></div><div class="n" style="left:238px">Ambient</div></div>
<div class="rw" style="top:1176px"><div class="lk" style="left:20px;width:24px"></div><div class="c" style="left:44px;width:80px;background:#33d0a0"></div><svg class="ic" style="left:48px;top:0" width="28" height="26"><use href="#gr"/></svg><div class="nu" style="left:88px;width:28px">20</div><div class="m" style="left:138px"><span>m</span></div><div class="s" style="left:182px"><span>s</span></div><div class="n" style="left:234px">Ambient</div></div>
<div class="rw" style="top:1204px"><div class="lk" style="left:20px;width:24px"></div><div class="c" style="left:44px;width:80px;background:#e7743a"></div><svg class="ic" style="left:47px;top:3px" width="36" height="22"><use href="#wf"/></svg><div class="nu" style="left:88px;width:28px">21</div><div class="m" style="left:138px"><span>m</span></div><div class="s" style="left:182px"><span>s</span></div><div class="n" style="left:234px">Atmospheres 01</div></div>
<div class="rw" style="top:1232px"><div class="lk" style="left:20px;width:24px"></div><div class="c" style="left:44px;width:80px;background:#e6b53c"></div><svg class="ic" style="left:47px;top:3px" width="36" height="22"><use href="#wf"/></svg><div class="nu" style="left:88px;width:28px">22</div><div class="m" style="left:138px"><span>m</span></div><div class="s" style="left:182px"><span>s</span></div><div class="n" style="left:234px">Atmospheres 02</div></div>
<div class="rw" style="top:1260px"><div class="lk" style="left:20px;width:24px"></div><div class="c" style="left:44px;width:80px;background:#d6e84a"></div><svg class="ic" style="left:47px;top:3px" width="36" height="22"><use href="#wf"/></svg><div class="nu" style="left:88px;width:28px">23</div><div class="m" style="left:138px"><span>m</span></div><div class="s" style="left:182px"><span>s</span></div><div class="n" style="left:234px">Atmospheres 03</div></div>
<div class="rw" style="top:1288px"><div class="lk" style="left:20px;width:24px"></div><div class="c" style="left:44px;width:80px;background:#8ae83a"></div><svg class="ic" style="left:47px;top:3px" width="36" height="22"><use href="#wf"/></svg><div class="nu" style="left:88px;width:28px">24</div><div class="m" style="left:138px"><span>m</span></div><div class="s" style="left:182px"><span>s</span></div><div class="n" style="left:234px">Noise 01</div></div>

<div class="a" style="left:36px;top:1330px;width:6px;height:3px;background:#c8c8c8"></div>
<svg class="a" style="left:490px;top:1322px" width="60" height="26"><path d="M0 6H16L8 15Z" fill="#8d9094"/><g transform="translate(50,13)" fill="#8d9094"><circle r="7"/><g stroke="#8d9094" stroke-width="4"><path d="M0 -11V11M-11 0H11M-8 -8L8 8M-8 8L8 -8"/></g><circle r="3" fill="#26292c"/></g></svg>
</body></html>
